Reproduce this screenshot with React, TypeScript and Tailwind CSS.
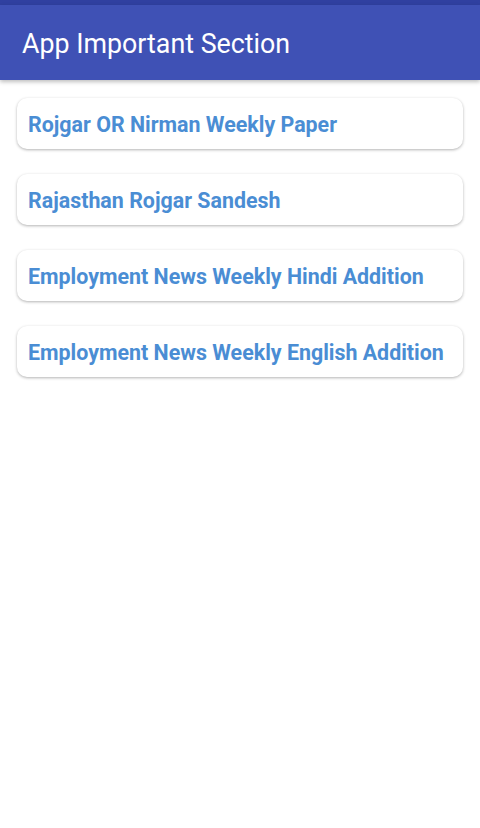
import React from "react";

const items = [
  "Rojgar OR Nirman Weekly Paper",
  "Rajasthan Rojgar Sandesh",
  "Employment News Weekly Hindi Addition",
  "Employment News Weekly English Addition",
];

const App = () => {
  return (
    <div className="min-h-[828px] bg-white font-['Roboto',sans-serif]">
      <div className="h-[5px] bg-[#3040a0]" />
      <div className="flex h-[75px] items-center bg-[#3f51b5] pl-[22px] pt-[3px] shadow-[0_2px_4px_rgba(0,0,0,0.25)]">
        <h1 className="text-[26.8px] text-white">App Important Section</h1>
      </div>

      <div className="mt-[18px] flex flex-col gap-[25px] px-[17px]">
        {items.map((item) => (
          <div
            key={item}
            className="flex h-[51px] items-center rounded-[10px] bg-white pl-[11px] pt-[3px] shadow-[0_1px_3px_rgba(0,0,0,0.3)]"
          >
            <span className="text-[21.4px] font-bold text-[#4a8dd4]">{item}</span>
          </div>
        ))}
      </div>
    </div>
  );
};

export default App;
